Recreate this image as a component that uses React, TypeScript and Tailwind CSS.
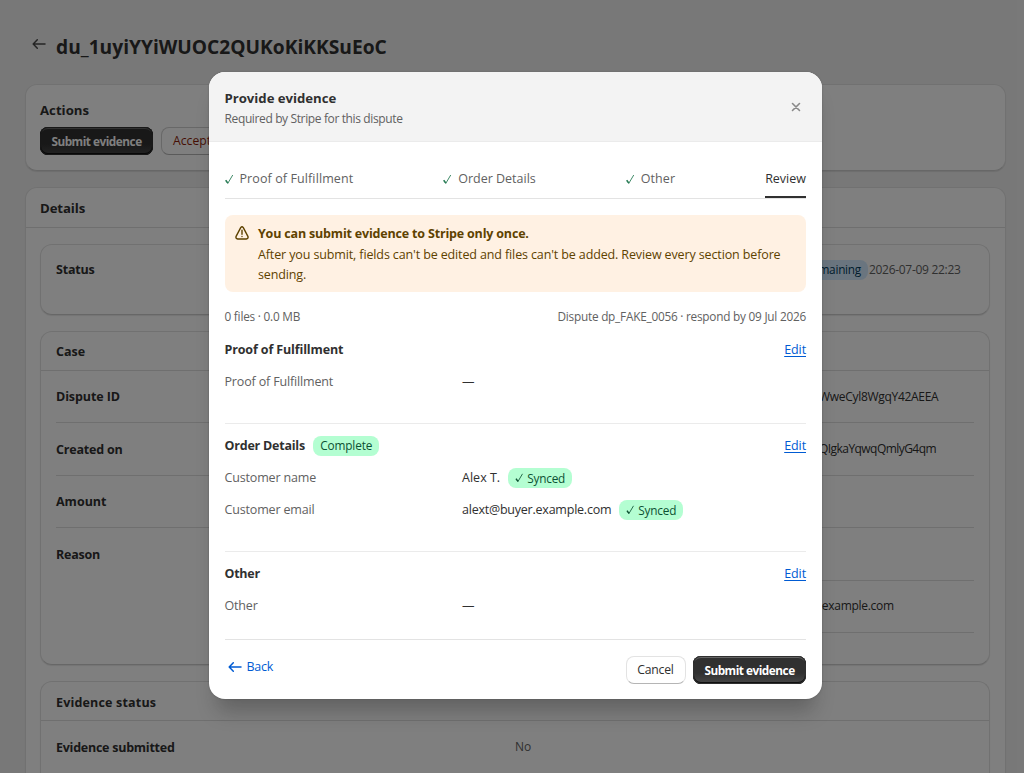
import type { ReactNode } from "react";

const card = "border border-[#e3e3e3] border-b-[#cfcfcf] bg-white shadow-[0_1px_1px_#00000018]";

function Check({ className }: { className: string }) {
  return (
    <svg viewBox="0 0 10 12" className={className} fill="none" stroke="currentColor" strokeWidth="1">
      <path d="M0.7 7.2 L3.1 10.3 L8.6 1" />
      <path d="M0.9 6.8 L3.2 10.1" strokeWidth="1.6" />
    </svg>
  );
}

function ArrowLeft({ className }: { className: string }) {
  return (
    <svg viewBox="0 0 14 12" className={className} fill="none" stroke="currentColor" strokeWidth="1.5" strokeLinecap="round" strokeLinejoin="round">
      <path d="M13 6 H1.3 M5.3 1.7 L1.2 6 L5.3 10.3" />
    </svg>
  );
}

function PrimaryButton({ className = "" }: { className?: string }) {
  return (
    <button
      className={`flex h-7 w-[113px] items-center justify-center rounded-lg bg-gradient-to-b from-[#303030] from-60% to-[#484848] pt-px text-[11.8px] font-bold tracking-[-0.49px] whitespace-nowrap text-white shadow-[inset_0_0_0_1px_#303030,inset_0_-1px_0_1px_#101010,inset_0_2px_0_#646464] ${className}`}
    >
      Submit evidence
    </button>
  );
}

function Synced() {
  return (
    <span className="flex h-5 w-16 items-center rounded-lg bg-[#b4fed2] pl-[7px] text-[11.8px] tracking-[-0.2px] text-[#0c5132]">
      <Check className="mr-[3px] h-[10px] w-[9px]" />
      Synced
    </span>
  );
}

function Edit() {
  return <a className="text-[12.5px] tracking-[-0.1px] text-[#005bd3] underline underline-offset-2">Edit</a>;
}

function Row({ label, children }: { label: string; children: ReactNode }) {
  return (
    <div className="flex h-5 items-center text-[12.5px] leading-5">
      <span className="w-[237.5px] tracking-[-0.16px] text-[#616161]">{label}</span>
      <span className="flex items-center gap-2 tracking-[-0.23px] text-[#303030]">{children}</span>
    </div>
  );
}

function Tab({ children, className }: { children: string; className: string }) {
  return (
    <div className="flex h-full items-center pt-px text-[12.5px] font-medium text-[#616161]">
      <Check className="mr-[6px] h-[11px] w-[9px] text-[#2a7d57]" />
      <span className={className}>{children}</span>
    </div>
  );
}

function Modal() {
  return (
    <div className="flex h-[627px] w-[613px] flex-col overflow-hidden rounded-2xl bg-white text-[#303030] shadow-[0_20px_20px_-8px_#1a1a1a47,0_0_2px_#1a1a1a40]">
      <header className="flex h-[70px] items-start justify-between border-b border-[#ebebeb] bg-[#f3f3f3] px-4 pt-4">
        <div className="-ml-[0.5px]">
          <h2 className="text-[13.2px] leading-5 font-bold tracking-[-0.03px]">Provide evidence</h2>
          <p className="mt-px text-[12px] leading-5 tracking-[-0.37px] text-[#616161]">Required by Stripe for this dispute</p>
        </div>
        <svg viewBox="0 0 10 10" className="mt-[14px] mr-[5px] size-[10px]" fill="none" stroke="#8a8a8a" strokeWidth="1.6" strokeLinecap="round">
          <path d="M1.5 1.5 L8.5 8.5 M8.5 1.5 L1.5 8.5" />
        </svg>
      </header>

      <div className="flex flex-1 flex-col pt-[17px] pr-4 pl-[15.5px]">
        <nav className="flex h-[40px] items-center justify-between border-b border-[#e3e3e3]">
          <Tab className="tracking-[0.1px]">Proof of Fulfillment</Tab>
          <Tab className="">Order Details</Tab>
          <Tab className="tracking-[0.1px]">Other</Tab>
          <div className="flex h-full items-center border-b-2 border-[#303030] pt-[3px] text-[12.5px] font-medium">Review</div>
        </nav>

        <section className="mt-4 flex h-[77px] rounded-lg bg-[#fff1e3] pt-2 pl-[10.5px] text-[12.5px] leading-5 text-[#5e4200]">
          <svg viewBox="0 0 14 14" className="mt-[3px] mr-[9px] size-[14px] shrink-0" fill="none" stroke="currentColor" strokeWidth="1.4" strokeLinecap="round" strokeLinejoin="round">
            <path d="M5.7 1.6 Q7 0 8.3 1.6 L12.9 10.3 Q13.6 12.8 11.3 13 H2.7 Q0.4 12.8 1.1 10.3 Z" />
            <path d="M7 4.2 V8.2 M7 10.5 V10.6" />
          </svg>
          <div>
            <h3 className="pt-px font-bold tracking-[-0.18px] text-[#5e4200]">You can submit evidence to Stripe only once.</h3>
            <p className="mt-px w-[536px] tracking-[-0.125px]">
              After you submit, fields can't be edited and files can't be added. Review every section before
              <br />
              sending.
            </p>
          </div>
        </section>

        <div className="mt-[15px] flex h-5 items-center justify-between text-[11.8px] text-[#616161]">
          <span className="tracking-[-0.22px]">0 files · 0.0 MB</span>
          <span className="tracking-[-0.23px]">Dispute dp_FAKE_0056 · respond by 09 Jul 2026</span>
        </div>

        <section className="mt-[13px] h-[84px] border-b border-[#ebebeb]">
          <div className="flex h-5 items-center justify-between">
            <h3 className="text-[12.5px] font-bold tracking-[-0.13px]">Proof of Fulfillment</h3>
            <Edit />
          </div>
          <div className="mt-3">
            <Row label="Proof of Fulfillment">—</Row>
          </div>
        </section>

        <section className="mt-3 h-[116px] shrink-0 border-b border-[#ebebeb]">
          <div className="flex h-5 items-center justify-between">
            <div className="flex items-center gap-2">
              <h3 className="text-[12.5px] font-bold tracking-[-0.22px]">Order Details</h3>
              <span className="flex h-5 w-[66.5px] items-center justify-center rounded-lg bg-[#b4fed2] text-[11.8px] tracking-[-0.12px] text-[#0c5132]">Complete</span>
            </div>
            <Edit />
          </div>
          <div className="mt-3 flex flex-col gap-3">
            <Row label="Customer name">
              <span className="tracking-[0.02px]">Alex T.</span>
              <Synced />
            </Row>
            <Row label="Customer email">
              alext@buyer.example.com
              <Synced />
            </Row>
          </div>
        </section>

        <section className="mt-3 h-[76px] shrink-0 border-b border-[#e3e3e3]">
          <div className="flex h-5 items-center justify-between">
            <h3 className="text-[12.5px] font-bold tracking-[-0.25px]">Other</h3>
            <Edit />
          </div>
          <div className="mt-3">
            <Row label="Other">—</Row>
          </div>
        </section>

        <footer className="mt-4 flex items-start">
          <button className="mt-[1px] ml-[3px] flex h-5 items-center text-[12.5px] tracking-[-0.25px] text-[#005bd3]">
            <ArrowLeft className="mr-[5px] h-3 w-[14px]" />
            Back
          </button>
          <button className="ml-auto h-7 w-[60px] rounded-lg border border-[#e3e3e3] border-b-[#b5b5b5] pt-px text-[12.2px] font-medium tracking-[-0.2px]">Cancel</button>
          <PrimaryButton className="ml-[7.5px]" />
        </footer>
      </div>
    </div>
  );
}

function Field({ label, value = "", className = "", valueClassName = "tracking-[-0.3px]" }: { label: string; value?: string; className?: string; valueClassName?: string }) {
  return (
    <div className="flex h-[52.4px] items-center justify-between border-b border-[#dedede]">
      <span className={`pt-[2px] font-bold ${className}`}>{label}</span>
      <span className={`w-[155px] text-[12px] whitespace-nowrap text-[#303030] ${valueClassName}`}>{value}</span>
    </div>
  );
}

function DisputePage() {
  return (
    <div className="px-[25px] pr-[18px] text-[12.5px] text-[#303030]">
      <header className="flex h-[84px] items-start">
        <ArrowLeft className="mt-[38px] ml-[7px] h-3 w-[14px] text-[#4a4a4a]" />
        <h1 className="mt-[33px] ml-[10px] text-[19.2px] leading-7 font-bold">du_1uyiYYiWUOC2QUKoKiKKSuEoC</h1>
      </header>

      <section className={`h-[87px] rounded-xl px-[14px] pt-[15px] ${card}`}>
        <h2 className="text-[13.2px] leading-5 font-bold">Actions</h2>
        <div className="mt-[7px] flex gap-2">
          <PrimaryButton />
          <button className="h-7 w-[120px] rounded-lg border border-[#d0d0d0] border-b-[#b5b5b5] pt-px pl-[11px] text-left text-[12.2px] font-medium text-[#8e1f0b]">Accept</button>
        </div>
      </section>

      <section className={`mt-4 rounded-xl ${card}`}>
        <h2 className="flex h-10 items-center border-b border-[#dedede] pt-[3px] pl-[14px] text-[13.2px] font-bold tracking-[-0.1px]">Details</h2>
        <div className="flex flex-col gap-4 pt-4 pr-[15px] pl-[14px]">
          <section className={`flex h-[71px] items-start justify-between rounded-xl pt-[15px] pr-[13px] pl-[15px] ${card}`}>
            <span className="leading-5 font-bold tracking-[-0.2px]">Status</span>
            <div className="flex h-5 w-[168px] items-center">
              <span className="flex h-5 w-[60px] items-center justify-end rounded-lg bg-[#d5ebff] pr-[7px] text-[11.8px] tracking-[-0.25px] text-[#003a5a]">remaining</span>
              <span className="ml-px text-[12px] tracking-[-0.3px] text-[#616161]">2026-07-09 22:23</span>
            </div>
          </section>

          <section className={`h-[334px] rounded-xl ${card}`}>
            <h3 className="flex h-[39px] items-center border-b border-[#dedede] pt-[3px] pl-[15px] font-bold">Case</h3>
            <div className="px-[15px]">
              <Field label="Dispute ID" value="WweCyl8WgqY42AEEA" className="tracking-[-0.1px]" />
              <Field label="Created on" value="QIgkaYqwqQmlyG4qm" className="tracking-[-0.2px]" valueClassName="tracking-[-0.55px]" />
              <Field label="Amount" />
              <div className="flex justify-between">
                <span className="pt-[18px] font-bold tracking-[-0.25px]">Reason</span>
                <div className="w-[457px]">
                  <Field label="" />
                  <Field label="" value=".example.com" />
                </div>
              </div>
            </div>
          </section>

          <section className={`h-[140px] rounded-xl ${card}`}>
            <h3 className="flex h-[39px] items-center border-b border-[#dedede] pt-[5px] pl-[15px] font-bold tracking-[0.18px]">Evidence status</h3>
            <div className="flex h-[52px] items-center px-[15px]">
              <span className="w-[459px] pt-[2px] font-bold tracking-[-0.25px]">Evidence submitted</span>
              <span className="text-[12px] text-[#616161]">No</span>
            </div>
          </section>
        </div>
      </section>
    </div>
  );
}

export default function App() {
  return (
    <main className="relative h-[773px] w-[1024px] overflow-hidden bg-[#f1f1f1] font-['Open_Sans','Noto_Sans',sans-serif]">
      <DisputePage />
      <div className="absolute inset-0 flex justify-center bg-black/50 pt-[72px] pl-[7px]">
        <Modal />
      </div>
    </main>
  );
}
